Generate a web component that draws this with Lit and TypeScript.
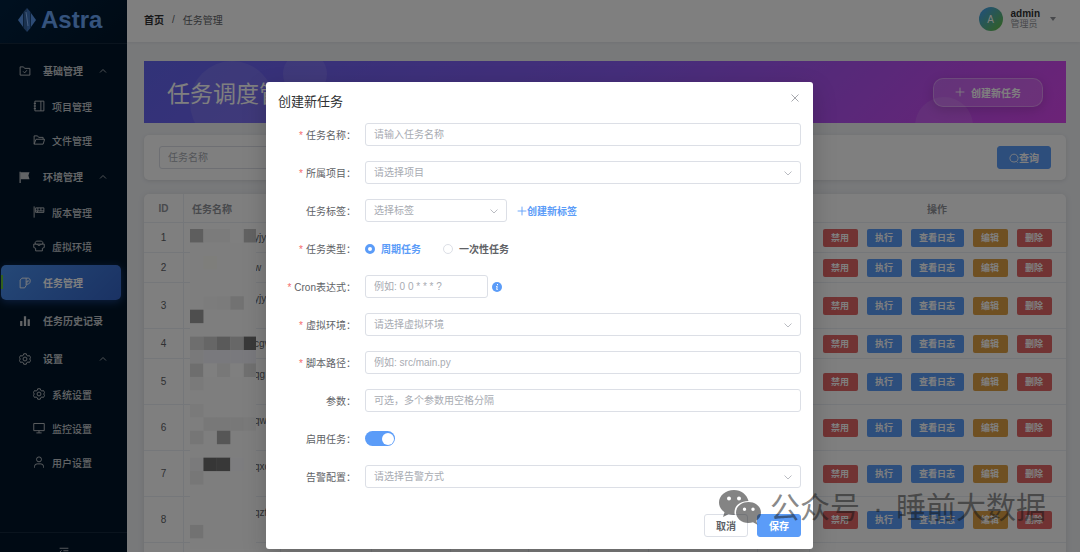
import { LitElement, html, svg, css } from "lit";
import { customElement } from "lit/decorators.js";
import { classMap } from "lit/directives/class-map.js";

const icons: Record<string, unknown> = {
  folderCheck: svg`<path d="M1.500 13.500V2.500h4.500l1.500 2h7v9z"/><path d="M5.500 8.500l2 2 3-3.500"/>`,
  notebook: svg`<path d="M2.500 1.500h12v13h-12zM10.500 1.500v13M1 4.500h3M1 8h3M1 11.500h3"/>`,
  folderOpen: svg`<path d="M1.500 13.500V2.500h4.500l1.500 2h6V7M1.500 13.500L4 7h11.500l-2 6.500z"/>`,
  flag: svg`<path d="M1.500 1v15" stroke-width="1.600"/><path d="M2 1.500h12l-1.500 4.500L14 11H2z" fill="currentColor" stroke="none"/>`,
  flagLine: svg`<path d="M1.500 0.500v15M3.500 2.500h11v6h-11zM3.500 6.500h2.500v2M6.500 2.500v4h4v-4M10.500 6.500h4"/>`,
  box: svg`<path d="M3 5.500V3l1.500-1.500h7L13 3v2.500M1 5.500h14v4.500l-2.500 1v3.500h-9V11L1 10zM5 5.500l1.500 1.500h3L11 5.500"/>`,
  task: svg`<path d="M9.500 11.500l-2 3h-6V4L4 1.500h5.500zM9.500 1.500h3q2.500.5 2.500 3.500t-2.500 4.500H9.500M12 4v2.500h-2.500"/>`,
  bars: svg`<path d="M1.500 8h3v6.500h-3zM6.500 1.500h3v13h-3zM11.500 5.500h3v9h-3z" fill="currentColor" stroke="none"/>`,
  gear: svg`<path d="M6.300 1h3.400l.5 2 1.700 1 2-.6 1.700 2.900L14.100 8l1.500 1.700-1.700 2.900-2-.6-1.700 1-.5 2H6.300l-.5-2-1.700-1-2 .6L.4 9.700 1.900 8 .4 6.300l1.700-2.900 2 .6 1.700-1z"/><circle cx="8" cy="8" r="2.600"/>`,
  monitor: svg`<path d="M1 2h14v9.500H1zM8 11.500v3M4.500 14.500h7"/>`,
  user: svg`<circle cx="8" cy="4.500" r="3.300"/><path d="M2 15.500v-1.500q0-3.500 3.500-3.500h5q3.500 0 3.500 3.500v1.500"/>`,
  up: svg`<path d="M2 11l6-6 6 6"/>`,
  down: svg`<path d="M1 5l7 7 7-7"/>`,
  plus: svg`<path d="M8 1v14M1 8h14"/>`,
  close: svg`<path d="M1 1l14 14M15 1L1 15"/>`,
  search: svg`<path d="M12 13.500A6.500 6.500 0 1 0 4 13.500M4 13.500q4 2 8 0l2 2"/>`,
  fold: svg`<path d="M1 2h14M7 6h8M7 10h8M1 14h14M4 5.500L1.500 8 4 10.500"/>`,
};

const icon = (name: string, cls = "") =>
  html`<svg class="icon ${cls}" viewBox="0 0 16 16" aria-hidden="true">${icons[name]}</svg>`;

type MenuItem = { label: string; icon: string; group?: boolean; sub?: boolean; active?: boolean };
const menu: MenuItem[] = [
  { label: "基础管理", icon: "folderCheck", group: true },
  { label: "项目管理", icon: "notebook", sub: true },
  { label: "文件管理", icon: "folderOpen", sub: true },
  { label: "环境管理", icon: "flag", group: true },
  { label: "版本管理", icon: "flagLine", sub: true },
  { label: "虚拟环境", icon: "box", sub: true },
  { label: "任务管理", icon: "task", active: true },
  { label: "任务历史记录", icon: "bars" },
  { label: "设置", icon: "gear", group: true },
  { label: "系统设置", icon: "gear", sub: true },
  { label: "监控设置", icon: "monitor", sub: true },
  { label: "用户设置", icon: "user", sub: true },
];

const rows = [
  { id: 1, name: "yjy", tall: false },
  { id: 2, name: "w", tall: false },
  { id: 3, name: "yjy", tall: true },
  { id: 4, name: "cgv", tall: false },
  { id: 5, name: "qg", tall: true },
  { id: 6, name: "qw", tall: true },
  { id: 7, name: "qxc", tall: true },
  { id: 8, name: "qzt", tall: true },
];

// Redaction tiles over the name column: [column, row, colour]
const tiles: [number, number, string][] = [
  [0, 0, "#bdbdbd"], [1, 0, "#f6f6f6"], [2, 0, "#f6f6f6"], [3, 0, "#ffffff"], [4, 0, "#c4c4c4"],
  [1, 2, "#fdfdf6"], [1, 5, "#f9f9f9"], [2, 5, "#f6f6f6"], [3, 5, "#e4e4e4"],
  [0, 6, "#9c9c9c"],
  [0, 8, "#dcdcdc"], [1, 8, "#cccccc"], [2, 8, "#b4b4b4"], [3, 8, "#cecece"], [4, 8, "#727272"],
  [0, 9, "#f2f2f4"], [1, 9, "#f2f2fa"], [2, 9, "#f2f2fa"], [3, 9, "#f2f2fa"], [4, 9, "#f2f2fa"],
  [0, 10, "#dddddd"], [1, 10, "#ffffff"], [2, 10, "#f0f0f0"], [3, 10, "#ffffff"], [4, 10, "#e0e0e0"],
  [0, 11, "#f4f4f4"], [0, 13, "#f4f4f4"], [1, 14, "#f0f0f0"], [2, 14, "#f0f0f0"], [3, 14, "#f0f0f0"], [4, 14, "#f4f4f4"],
  [0, 15, "#ececec"], [2, 15, "#adadad"],
  [0, 17, "#f4f4f6"], [1, 17, "#6c6c6c"], [2, 17, "#707070"], [3, 17, "#fafaff"],
  [0, 18, "#eeeeee"], [0, 22, "#e4e4e4"], [1, 22, "#fcfcfc"],
];

@customElement("app-root")
export class AppRoot extends LitElement {
  static styles = css`
    :host {
      display: block;
      position: relative;
      height: 100vh;
      overflow: hidden;
      font-family: "Liberation Sans", "Noto Sans CJK SC", sans-serif;
      font-size: 10px;
      color: #606266;
      background: #f0f2f5;
    }
    * { box-sizing: border-box; }
    button, input, select { font: inherit; margin: 0; }
    button { cursor: pointer; }
    h1, h2, p { margin: 0; font-weight: 400; }
    a { text-decoration: none; color: inherit; }
    .icon {
      width: 12px;
      height: 12px;
      flex: none;
      fill: none;
      stroke: currentColor;
      stroke-width: 1.2;
    }
    .icon.small { width: 8px; height: 8px; stroke-width: 1.6; }
    .icon.medium { width: 10px; height: 10px; stroke-width: 1.4; }

    .shell { display: grid; grid-template-columns: 127px minmax(0, 1fr); height: 100%; }
    .sidebar {
      display: flex;
      flex-direction: column;
      min-height: 0;
      background: #001529;
      color: #c4c8cc;
    }
    .logo {
      display: flex;
      flex: none;
      align-items: center;
      gap: 4px;
      height: 44px;
      padding: 0 17px 4px;
      border-bottom: 1px solid #14293c;
      background: linear-gradient(135deg, #002140, #001529);
      color: #6aa7fa;
      font-size: 24px;
      font-weight: 700;
    }
    .logo svg { width: 20px; height: 24px; }
    .menu { display: flex; flex-direction: column; flex: 1; min-height: 0; padding-top: 7px; overflow: hidden; }
    .item {
      display: flex;
      flex: none;
      align-items: center;
      height: 35px;
      margin: 2px 6px 1px 1px;
      padding: 0 14px 0 18px;
      border-radius: 5px;
      font-weight: 700;
    }
    .item .label { margin-left: 12px; flex: 1; }
    .item.sub { height: 34px; margin-top: 0; margin-bottom: 0; padding-left: 32px; font-weight: 500; }
    .item.sub .label { margin-left: 7px; }
    .item.active {
      position: relative;
      background: linear-gradient(135deg, #4a90ee, #3565c8);
      box-shadow: 0 2px 8px rgba(64, 128, 255, 0.4);
      color: #ffffff;
    }
    .item.active::before {
      content: "";
      position: absolute;
      left: 0;
      top: 10px;
      width: 2px;
      height: 14px;
      background: #67c23a;
    }
    .fold {
      display: flex;
      flex: none;
      justify-content: center;
      height: 20px;
      padding: 14px 0 0;
      border: 0;
      border-top: 1px solid #14293c;
      background: none;
      color: #c4c8cc;
      overflow: hidden;
    }
    .content { display: flex; flex-direction: column; min-width: 0; min-height: 0; }
    .topbar {
      display: flex;
      flex: none;
      align-items: center;
      justify-content: space-between;
      height: 42px;
      padding: 0 24px 4px 17px;
      background: #ffffff;
      box-shadow: 0 1px 3px rgba(0, 0, 0, 0.06);
    }
    .crumbs { display: flex; align-items: center; gap: 8px; }
    .crumbs a { color: #303133; font-weight: 700; }
    .account {
      display: flex;
      align-items: center;
      gap: 8px;
      padding: 0;
      border: 0;
      background: none;
      text-align: left;
      line-height: 11px;
      color: #909399;
    }
    .avatar {
      display: grid;
      place-items: center;
      width: 24px;
      height: 24px;
      border-radius: 50%;
      background: linear-gradient(135deg, #409eff, #67c23a);
      color: #ffffff;
    }
    .who { display: grid; font-size: 9px; }
    .who strong { color: #303133; font-size: 10px; }
    .caret { width: 6px; height: 4px; margin-left: 2px; fill: #909399; }

    .main { flex: 1; min-height: 0; padding: 19px 14px 0 17px; overflow: hidden; }
    .banner {
      position: relative;
      display: flex;
      align-items: center;
      justify-content: space-between;
      height: 62px;
      padding: 0 23px;
      overflow: hidden;
      background: linear-gradient(135deg, #6366f1 0%, #8b5cf6 50%, #d946ef 100%);
      color: #ffffff;
    }
    .banner h1 { position: relative; font-size: 23px; }
    .bubble { position: absolute; border-radius: 50%; background: rgba(255, 255, 255, 0.1); }
    .bubble.one { left: 46px; top: 0; width: 84px; height: 84px; }
    .bubble.two { left: 139px; top: -9px; width: 44px; height: 44px; }
    .bubble.three { right: 93px; bottom: -32px; width: 58px; height: 58px; }
    .create {
      position: relative;
      display: flex;
      align-items: center;
      justify-content: center;
      gap: 6px;
      width: 110px;
      height: 29px;
      border: 1px solid rgba(255, 255, 255, 0.3);
      border-radius: 10px;
      background: rgba(255, 255, 255, 0.15);
      box-shadow: 0 3px 12px rgba(0, 0, 0, 0.15);
      color: #ffffff;
      font-weight: 700;
    }
    .search {
      display: flex;
      align-items: center;
      justify-content: space-between;
      height: 45px;
      margin: 12px 0 14px;
      padding: 0 15px;
      border-radius: 5px;
      background: #ffffff;
      box-shadow: 0 1px 4px rgba(0, 0, 0, 0.1);
    }
    .field {
      width: 100%;
      height: 23px;
      padding: 0 8px;
      border: 1px solid #dcdfe6;
      border-radius: 3px;
      background: #ffffff;
      color: #a8abb2;
      outline: none;
    }
    .field::placeholder { color: #a8abb2; opacity: 1; }
    .search .field { width: 150px; }
    .primary {
      display: flex;
      align-items: center;
      justify-content: center;
      border: 1px solid #5b9cf8;
      border-radius: 3px;
      background: #5b9cf8;
      color: #ffffff;
      font-weight: 700;
    }
    .search .primary { width: 54px; height: 23px; }

    .tablebox { position: relative; border-radius: 5px; background: #ffffff; box-shadow: 0 1px 6px rgba(0, 0, 0, 0.1); }
    table { width: 100%; border-collapse: separate; border-spacing: 0; table-layout: fixed; }
    th, td {
      height: 30px;
      padding: 0 8px;
      border-right: 1px solid #ebeef5;
      border-bottom: 1px solid #ebeef5;
      text-align: left;
    }
    th { height: 29px; color: #909399; font-weight: 700; }
    th:last-child, td:last-child { border-right: 0; padding-right: 10px; }
    .center { text-align: center; }
    .tall td { height: 46px; }
    .c-id { width: 40px; }
    .c-name { width: 97px; }
    .c-a { width: 91px; }
    .c-b { width: 79px; }
    .c-d { width: 120px; }
    .c-e { width: 109px; }
    .c-f { width: 52px; }
    .c-ops { width: 256px; }
    .name { display: block; padding-left: 62px; line-height: 15px; white-space: nowrap; overflow: hidden; }
    .tall .name { padding-bottom: 15px; }
    .ops { display: flex; justify-content: center; gap: 9px; }
    .op {
      width: 35px;
      height: 18px;
      padding: 0;
      border: 0;
      border-radius: 2px;
      color: #ffffff;
      font-size: 9px;
      font-weight: 700;
      line-height: 18px;
    }
    .op.wide { width: 53px; }
    .op.red { background: #e26666; }
    .op.blue { background: #5b9cf8; }
    .op.amber { background: #dfa044; }
    .tiles { position: absolute; left: 46px; top: 35px; width: 66px; height: 320px; }

    .mask {
      position: absolute;
      inset: 0;
      display: flex;
      justify-content: center;
      align-items: flex-start;
      padding: 82px 1px 0 0;
      background: rgba(0, 0, 0, 0.5);
    }
    .dialog {
      width: 547px;
      max-width: 96%;
      padding: 12px;
      border-radius: 3px;
      background: #ffffff;
      box-shadow: 0 8px 24px rgba(0, 0, 0, 0.2);
    }
    .head { display: flex; align-items: flex-start; justify-content: space-between; height: 29px; }
    .head h2 { font-size: 13px; line-height: 16px; color: #303133; }
    .ghost { display: flex; padding: 0; border: 0; background: none; color: #909399; }
    .head .ghost { margin-right: 2px; }
    .row {
      display: grid;
      grid-template-columns: 78px minmax(0, 1fr);
      column-gap: 9px;
      align-items: center;
      height: 23px;
      margin-bottom: 15px;
    }
    .row .caption { text-align: right; white-space: nowrap; }
    .req { margin-right: 3px; color: #f56c6c; }
    .line { display: flex; align-items: center; }
    .pick { position: relative; width: 100%; }
    .pick select { appearance: none; display: block; }
    .pick .icon { position: absolute; right: 9px; top: 8px; color: #a8abb2; pointer-events: none; }
    .pick.short { width: 142px; margin-right: 10px; }
    .link { align-items: center; color: #5b9cf8; font-weight: 700; }
    .cron { width: 123px; }
    .info { width: 10px; height: 10px; margin-left: 4px; }
    .radio { display: flex; align-items: center; gap: 6px; margin-right: 22px; font-weight: 700; }
    .radio input {
      appearance: none;
      width: 10px;
      height: 10px;
      margin: 0;
      border: 1px solid #dcdfe6;
      border-radius: 50%;
      background: #ffffff;
    }
    .radio input:checked { border: 3px solid #5b9cf8; }
    .radio.on { color: #5b9cf8; }
    .switch {
      appearance: none;
      display: flex;
      align-items: center;
      justify-content: flex-end;
      width: 30px;
      height: 15px;
      padding: 1px;
      border-radius: 8px;
      background: #5b9cf8;
    }
    .switch::before { content: ""; width: 12px; height: 12px; border-radius: 50%; background: #ffffff; }
    .foot { display: flex; justify-content: flex-end; gap: 9px; padding-top: 11px; }
    .foot button { width: 44px; height: 23px; padding: 0; }
    .cancel { border: 1px solid #dcdfe6; border-radius: 3px; background: #ffffff; color: #606266; font-weight: 700; }

    .watermark {
      position: absolute;
      right: 34px;
      bottom: 24px;
      display: flex;
      align-items: center;
      gap: 13px;
      color: rgba(20, 20, 20, 0.52);
      font-size: 30px;
      line-height: 40px;
      pointer-events: none;
    }
    .watermark svg { width: 42px; height: 36px; margin-right: -4px; }
  `;

  private caption(label: string, forId: string, required: boolean) {
    return html`<label class="caption" for=${forId}>${required ? html`<span class="req">*</span>` : ""}${label}：</label>`;
  }

  private textRow(id: string, label: string, placeholder: string, required = false) {
    return html`<div class="row">
      ${this.caption(label, id, required)}
      <input class="field" id=${id} type="text" placeholder=${placeholder} />
    </div>`;
  }

  private picker(id: string, placeholder: string, short = false) {
    return html`<div class=${classMap({ pick: true, short })}>
      <select class="field" id=${id}><option>${placeholder}</option></select>
      ${icon("down", "small")}
    </div>`;
  }

  private pickRow(id: string, label: string, placeholder: string, required = false) {
    return html`<div class="row">${this.caption(label, id, required)}${this.picker(id, placeholder)}</div>`;
  }

  private sidebar() {
    return html`<aside class="sidebar">
      <div class="logo">
        <svg viewBox="0 0 20 24" aria-hidden="true">
          <path d="M6 5v14L1 12z" fill="#5a97ea"/>
          <path d="M10 0v24L6.500 20V4z" fill="#35629f"/>
          <path d="M10 0l3.500 4v16L10 24z" fill="#3f74bd"/>
          <path d="M9 4l2 14" stroke="#8dbcff" stroke-width="1"/>
          <path d="M14 5l5 7-5 7z" fill="#5a97ea"/>
        </svg>
        <span>Astra</span>
      </div>
      <nav class="menu">
        ${menu.map((m) => html`<a href="#" class=${classMap({ item: true, sub: !!m.sub, active: !!m.active })}>
          ${icon(m.icon)}<span class="label">${m.label}</span>${m.group ? icon("up", "small") : ""}
        </a>`)}
      </nav>
      <button class="fold" aria-label="折叠菜单">${icon("fold", "medium")}</button>
    </aside>`;
  }

  private table() {
    return html`<div class="tablebox">
      <table>
        <colgroup>
          <col class="c-id" /><col class="c-name" /><col class="c-a" /><col class="c-b" /><col />
          <col class="c-d" /><col class="c-e" /><col class="c-f" /><col class="c-ops" />
        </colgroup>
        <thead>
          <tr>
            <th class="center">ID</th><th>任务名称</th><th></th><th></th><th></th><th></th><th></th><th></th>
            <th class="center">操作</th>
          </tr>
        </thead>
        <tbody>
          ${rows.map((r) => html`<tr class=${classMap({ tall: r.tall })}>
            <td class="center">${r.id}</td>
            <td><span class="name">${r.name}</span></td>
            <td></td><td></td><td></td><td></td><td></td><td></td>
            <td>
              <div class="ops">
                <button class="op red">禁用</button>
                <button class="op blue">执行</button>
                <button class="op blue wide">查看日志</button>
                <button class="op amber">编辑</button>
                <button class="op red">删除</button>
              </div>
            </td>
          </tr>`)}
          <tr class="tall">
            <td></td><td></td><td></td><td></td><td></td><td></td><td></td><td></td><td></td>
          </tr>
        </tbody>
      </table>
      <svg class="tiles" viewBox="0 0 66 320" aria-hidden="true">
        <rect width="66" height="320" fill="#fdfdfd"/>
        ${tiles.map(([c, r, fill]) => svg`<rect x=${c * 13.45} y=${r * 13.45} width="13.45" height="13.45" fill=${fill}/>`)}
      </svg>
    </div>`;
  }

  private dialog() {
    return html`<div class="mask">
      <form class="dialog" role="dialog" aria-label="创建新任务">
        <div class="head">
          <h2>创建新任务</h2>
          <button type="button" class="ghost" aria-label="关闭">${icon("close", "small")}</button>
        </div>
        ${this.textRow("name", "任务名称", "请输入任务名称", true)}
        ${this.pickRow("project", "所属项目", "请选择项目", true)}
        <div class="row">
          ${this.caption("任务标签", "tag", false)}
          <div class="line">
            ${this.picker("tag", "选择标签", true)}
            <button type="button" class="ghost link">${icon("plus", "medium")}创建新标签</button>
          </div>
        </div>
        <div class="row">
          ${this.caption("任务类型", "periodic", true)}
          <div class="line">
            <label class="radio on"><input id="periodic" type="radio" name="kind" checked />周期任务</label>
            <label class="radio"><input type="radio" name="kind" />一次性任务</label>
          </div>
        </div>
        <div class="row">
          ${this.caption("Cron表达式", "cron", true)}
          <div class="line">
            <input class="field cron" id="cron" type="text" placeholder="例如: 0 0 * * * ?" />
            <svg class="info" viewBox="0 0 10 10" aria-hidden="true">
              <circle cx="5" cy="5" r="5" fill="#5b9cf8"/>
              <path d="M5.500 2v1.200M4.200 4.500h1L4.700 7.500h1" fill="none" stroke="#fff" stroke-width="1"/>
            </svg>
          </div>
        </div>
        ${this.pickRow("env", "虚拟环境", "请选择虚拟环境", true)}
        ${this.textRow("script", "脚本路径", "例如: src/main.py", true)}
        ${this.textRow("args", "参数", "可选，多个参数用空格分隔")}
        <div class="row">
          ${this.caption("启用任务", "enabled", false)}
          <input class="switch" id="enabled" type="checkbox" role="switch" checked />
        </div>
        ${this.pickRow("alert", "告警配置", "请选择告警方式")}
        <div class="foot">
          <button type="button" class="cancel">取消</button>
          <button type="button" class="primary">保存</button>
        </div>
      </form>
    </div>`;
  }

  render() {
    return html`
      <div class="shell">
        ${this.sidebar()}
        <div class="content">
          <header class="topbar">
            <nav class="crumbs"><a href="#">首页</a><span>/</span><span>任务管理</span></nav>
            <button class="account">
              <span class="avatar">A</span>
              <span class="who"><strong>admin</strong>管理员</span>
              <svg class="caret" viewBox="0 0 6 4" aria-hidden="true"><path d="M0 0h6L3 4z"/></svg>
            </button>
          </header>
          <main class="main">
            <section class="banner">
              <span class="bubble one"></span><span class="bubble two"></span><span class="bubble three"></span>
              <h1>任务调度管理</h1>
              <button class="create">${icon("plus", "medium")}创建新任务</button>
            </section>
            <section class="search">
              <input class="field" type="text" placeholder="任务名称" aria-label="任务名称" />
              <button class="primary">${icon("search", "medium")}查询</button>
            </section>
            ${this.table()}
          </main>
        </div>
      </div>
      ${this.dialog()}
      <div class="watermark">
        <svg viewBox="0 0 42 36" aria-hidden="true">
          <path fill="currentColor" fill-rule="evenodd" d="M15 0C6.500 0 0 5.600 0 12.500c0 4 2 7.300 5.500 9.700L4 27l5.500-2.800c2 .6 4 .9 6.300.8C14 17 20 11 29.500 11 28 4.500 22 0 15 0zM10 6.500a2 2 0 1 1 0 4 2 2 0 0 1 0-4zM20 6.500a2 2 0 1 1 0 4 2 2 0 0 1 0-4z"/>
          <path fill="currentColor" fill-rule="evenodd" d="M29.500 12C22.500 12 17 16.700 17 22.500S22.500 33 29.500 33c1.500 0 3-.2 4.500-.7l4.500 2.500-1.200-4c3-2 4.700-5 4.700-8.300C42 16.700 36.500 12 29.500 12zM25.500 17.500a1.700 1.700 0 1 1 0 3.400 1.700 1.700 0 0 1 0-3.400zM34 17.500a1.700 1.700 0 1 1 0 3.400 1.700 1.700 0 0 1 0-3.400z"/>
        </svg>
        <span>公众号</span><span>·</span><span>睡前大数据</span>
      </div>
    `;
  }
}
